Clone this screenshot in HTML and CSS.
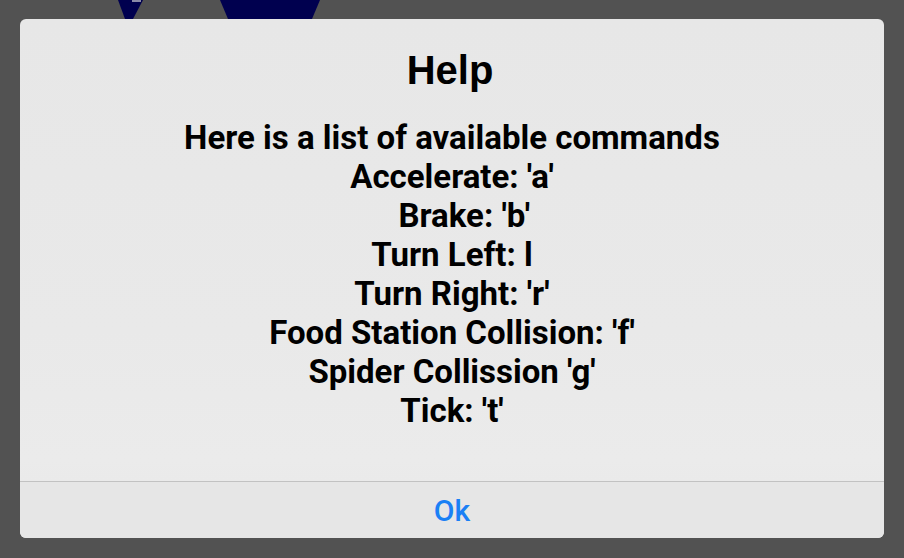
FILE: index.html
```html
<!DOCTYPE html>
<html>
<head>
<meta charset="utf-8">
<link rel="stylesheet" href="styles.css">
</head>
<body>
<div class="backdrop">
  <svg class="bg-shapes" width="904" height="40" viewBox="0 0 904 40">
    <polygon points="118,0 143,0 133,19 125,19" fill="#00004f"/>
    <rect x="132" y="0" width="9" height="2" fill="#8a8aa8"/>
    <polygon points="220,0 320,0 312,19 228,19" fill="#00004f"/>
  </svg>
</div>
<div class="dialog">
  <h1 class="title">Help</h1>
  <div class="body">
    <p>Here is a list of available commands</p>
    <p>Accelerate: 'a'</p>
    <p class="pre">   Brake: 'b'</p>
    <p>Turn Left: l</p>
    <p>Turn Right: 'r'</p>
    <p>Food Station Collision: 'f'</p>
    <p>Spider Collission 'g'</p>
    <p>Tick: 't'</p>
  </div>
  <div class="actions">
    <button class="ok">Ok</button>
  </div>
</div>
</body>
</html>
```
FILE: styles.css
```css
html, body {
  margin: 0;
  padding: 0;
}
body {
  width: 904px;
  height: 558px;
  background: #525252;
  overflow: hidden;
  position: relative;
  padding-top: 19px;
  box-sizing: border-box;
}
.backdrop {
  position: absolute;
  left: 0;
  top: 0;
}
.bg-shapes {
  display: block;
}
.dialog {
  position: relative;
  margin: 0 20px;
  height: 519px;
  background: linear-gradient(#e7e7e7, #e9e9e9 60%, #ebebeb 85%, #e7e7e7);
  border-radius: 6px;
  display: flex;
  flex-direction: column;
  box-sizing: border-box;
}
.title {
  margin: 0;
  padding-top: 28px;
  padding-right: 4px;
  font-family: "Liberation Sans", Arial, sans-serif;
  font-weight: bold;
  font-size: 40px;
  line-height: 46px;
  text-align: center;
  color: #000;
}
.body {
  flex: 1;
  padding-top: 25px;
  font-family: Roboto, sans-serif;
  font-weight: bold;
  font-size: 33px;
  line-height: 39px;
  text-align: center;
  color: #000;
}
.body p {
  margin: 0;
}
.body .pre {
  white-space: pre;
}
.actions {
  border-top: 1px solid #c2c2c2;
  height: 56px;
  display: flex;
  align-items: center;
  justify-content: center;
  background: #e6e6e6;
  border-radius: 0 0 6px 6px;
}
.ok {
  background: none;
  border: none;
  padding: 0;
  font-family: Roboto, sans-serif;
  font-weight: 500;
  font-size: 30px;
  color: #1a80f5;
  cursor: pointer;
}
```
